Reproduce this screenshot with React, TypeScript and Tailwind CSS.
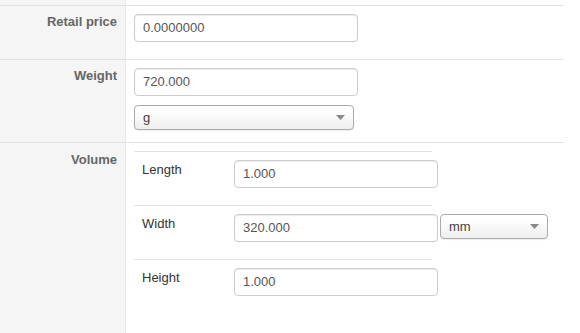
import React from "react";

const inputCls =
  "h-[28px] rounded-[4px] border border-[#cccccc] bg-white px-[8px] text-[13px] text-[#555555] shadow-[inset_0_1px_1px_rgba(0,0,0,0.075)] flex items-center";

function Select({ value, w, h }: { value: string; w: string; h: string }) {
  return (
    <div
      className={`${w} ${h} rounded-[4px] border border-[#aaaaaa] bg-gradient-to-b from-white from-20% to-[#eeeeee] shadow-[0_0_3px_rgba(255,255,255,1),0_1px_1px_rgba(0,0,0,0.1)] flex items-center justify-between pl-[8px] pr-[8px] text-[13px] text-[#444444]`}
    >
      <span>{value}</span>
      <svg width="9" height="5" viewBox="0 0 9 5">
        <path d="M0 0 L9 0 L4.5 5 Z" fill="#888888" />
      </svg>
    </div>
  );
}

function Label({ text, pt }: { text: string; pt: string }) {
  return (
    <div
      className={`w-[126px] shrink-0 bg-[#f5f5f5] border-r border-[#e8e8e8] text-right pr-[8px] ${pt} text-[13px] leading-[18px] font-bold text-[#666666]`}
    >
      {text}
    </div>
  );
}

export default function App() {
  return (
    <div
      className="w-[580px] h-[333px] overflow-hidden bg-white"
      style={{ fontFamily: '"Liberation Sans", Arial, sans-serif' }}
    >
      <div className="w-[564px] flex flex-col h-full">
        <div className="flex h-[6px] border-b border-[#e2e2e2]">
          <div className="w-[126px] shrink-0 bg-[#f5f5f5] border-r border-[#e8e8e8]" />
        </div>
        {/* Retail price */}
        <div className="flex border-b border-[#e2e2e2]">
          <Label text="Retail price" pt="pt-[7px]" />
          <div className="pl-[8px] pt-[8px] pb-[17px]">
            <div className={`${inputCls} w-[224px]`}>0.0000000</div>
          </div>
        </div>
        {/* Weight */}
        <div className="flex border-b border-[#e2e2e2]">
          <Label text="Weight" pt="pt-[7px]" />
          <div className="pl-[8px] pt-[8px] pb-[12px] flex flex-col gap-[9px]">
            <div className={`${inputCls} w-[224px]`}>720.000</div>
            <Select value="g" w="w-[220px]" h="h-[25px]" />
          </div>
        </div>
        {/* Volume */}
        <div className="flex flex-1">
          <Label text="Volume" pt="pt-[8px]" />
          <div className="pl-[8px] pt-[8px] flex flex-col">
            {["Length", "Width", "Height"].map((name, i) => (
              <div
                key={name}
                className="w-[298px] border-t border-[#e2e2e2] flex pt-[8px] pb-[17px]"
              >
                <div className="w-[100px] shrink-0 pl-[8px] pt-[1px] text-[13px] leading-[18px] text-[#333333]">
                  {name}
                </div>
                <div className="flex gap-[2px] shrink-0">
                  <div className={`${inputCls} w-[204px]`}>
                    {i === 1 ? "320.000" : "1.000"}
                  </div>
                  {i === 1 && <Select value="mm" w="w-[108px]" h="h-[25px]" />}
                </div>
              </div>
            ))}
          </div>
        </div>
      </div>
    </div>
  );
}
